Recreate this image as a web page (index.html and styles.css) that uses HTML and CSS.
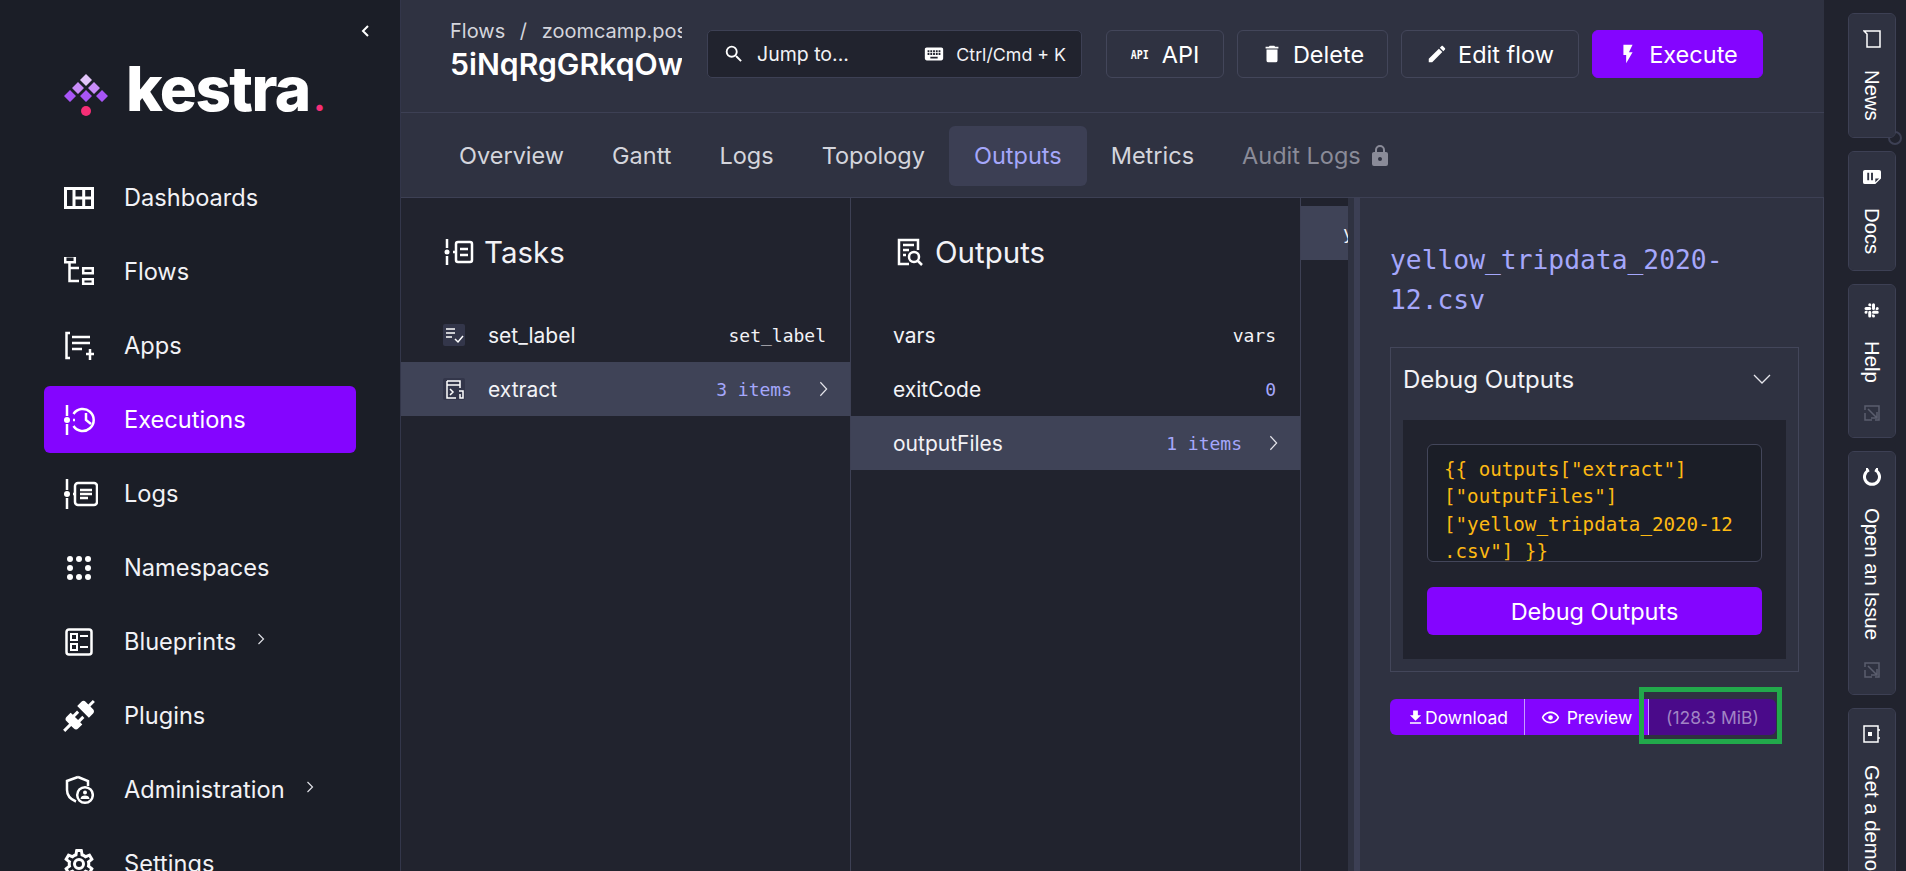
FILE: index.html
```html
<!DOCTYPE html>
<html lang="en">
<head>
    <meta charset="UTF-8">
    <meta name="viewport" content="width=device-width, initial-scale=1.0">
    <title>Kestra - Execution outputs</title>
    <link rel="stylesheet" href="styles.css">
</head>
<body>

    <aside class="sidebar">
        <div class="collapse-row">
            <svg class="collapse-icon" viewBox="0 0 10 14"><path d="M8 2 3 7l5 5"/></svg>
        </div>
        <div class="logo">
            <svg class="logo-mark" viewBox="0 0 44 44">
                <path class="d1" d="M22 1l6 6-6 6-6-6z"/>
                <path class="d2" d="M14 9l6 6-6 6-6-6zM30 9l6 6-6 6-6-6z"/>
                <path class="d3" d="M6 17l6 6-6 6-6-6zM22 17l6 6-6 6-6-6zM38 17l6 6-6 6-6-6z"/>
                <circle class="d4" cx="22" cy="38" r="5"/>
            </svg>
            <span class="logo-text">kestra<span class="logo-dot">.</span></span>
        </div>
        <nav class="nav">
            <a class="nav-item">
                <svg class="nav-icon stroke-wall" viewBox="0 0 30 22"><path d="M1.5 1.5h27v19h-27zM10 1.5v19M19.700 1.500v19M10 11h19"/></svg>
                Dashboards
            </a>
            <a class="nav-item">
                <svg class="nav-icon stroke" viewBox="0 2 30 30"><path d="M1.200 1.200h9.600v6H1.200zM5.500 8v18H15M5.500 13H15M19.200 13.200h9.600v5h-9.600zM19.200 24.200h9.600v4.500h-9.600z"/></svg>
                Flows
            </a>
            <a class="nav-item">
                <svg class="nav-icon stroke" viewBox="0 0 30 30"><path d="M6 2H2.500v25H6M8 6h18M8 12h18M8 18h10M22 23h8M26 18v11"/></svg>
                Apps
            </a>
            <a class="nav-item active">
                <svg class="nav-icon wide stroke" viewBox="0 0 34 30"><path d="M3 0v11M3 19v11M11 15H9M9.500 9a11 11 0 1 1 0 12M22 8v7l5 4"/><circle class="solid" cx="3" cy="15" r="3"/></svg>
                Executions
            </a>
            <a class="nav-item">
                <svg class="nav-icon wide stroke" viewBox="0 0 34 30"><path d="M3 0v11M3 19v11M11 15H9M14 4h16a3 3 0 0 1 3 3v16a3 3 0 0 1-3 3H14a3 3 0 0 1-3-3V7a3 3 0 0 1 3-3zM16 11h12M16 15h12M16 19h8"/><circle class="solid" cx="3" cy="15" r="3"/></svg>
                Logs
            </a>
            <a class="nav-item">
                <svg class="nav-icon" viewBox="0 0 30 30"><g class="solid"><circle cx="6" cy="6" r="3"/><circle cx="15" cy="6" r="3"/><circle cx="24" cy="6" r="3"/><circle cx="6" cy="15" r="3"/><circle cx="24" cy="15" r="3"/><circle cx="6" cy="24" r="3"/><circle cx="15" cy="24" r="3"/><circle cx="24" cy="24" r="3"/></g></svg>
                Namespaces
            </a>
            <a class="nav-item">
                <svg class="nav-icon stroke" viewBox="0 0 30 30"><path d="M5 2.500h20A2.500 2.500 0 0 1 27.500 5v20a2.500 2.500 0 0 1-2.500 2.500H5A2.500 2.500 0 0 1 2.500 25V5A2.500 2.500 0 0 1 5 2.500z"/><path class="thin" d="M7 7h6v6H7zM7 17h6v6H7zM16 9h8M16 20h8"/></svg>
                Blueprints <svg class="nav-arrow" viewBox="0 0 8 12"><path d="M1.500 1l5 5-5 5"/></svg>
            </a>
            <a class="nav-item">
                <svg class="nav-icon plug" viewBox="0 0 24 24"><path class="solid" d="M21.400 7.500C22.200 8.300 22.200 9.600 21.400 10.300L18.600 13.100L10.800 5.300L13.600 2.500C14.400 1.700 15.700 1.700 16.400 2.500L18.200 4.300L21.200 1.300L22.600 2.700L19.600 5.700L21.400 7.500M15.600 13.300L14.200 11.900L11.400 14.700L9.300 12.600L12.100 9.800L10.700 8.400L7.900 11.200L6.400 9.800L3.600 12.600C2.800 13.400 2.800 14.700 3.600 15.400L5.400 17.200L1.400 21.200L2.800 22.600L6.800 18.600L8.600 20.400C9.400 21.200 10.700 21.200 11.400 20.400L14.200 17.600L12.800 16.200L15.600 13.300Z"/></svg>
                Plugins
            </a>
            <a class="nav-item">
                <svg class="nav-icon stroke" viewBox="0 0 30 30"><path d="M14 2 3 6v9c0 6 4 9.500 9 11.500M14 2l10 4v5"/><circle cx="21" cy="20" r="7.800"/><circle class="solid" cx="21" cy="17.500" r="2"/><path class="solid" d="M16.500 24c0-2.500 2-3.500 4.500-3.500s4.500 1 4.500 3.500z"/></svg>
                Administration <svg class="nav-arrow" viewBox="0 0 8 12"><path d="M1.500 1l5 5-5 5"/></svg>
            </a>
            <a class="nav-item">
                <svg class="nav-icon cog" viewBox="0 0 24 24"><path class="solid" d="M12,8A4,4 0 0,1 16,12A4,4 0 0,1 12,16A4,4 0 0,1 8,12A4,4 0 0,1 12,8M12,10A2,2 0 0,0 10,12A2,2 0 0,0 12,14A2,2 0 0,0 14,12A2,2 0 0,0 12,10M10,22C9.75,22 9.54,21.82 9.5,21.58L9.13,18.93C8.5,18.68 7.96,18.34 7.44,17.94L4.95,18.95C4.73,19.03 4.46,18.95 4.34,18.73L2.34,15.27C2.21,15.05 2.27,14.78 2.46,14.63L4.57,12.97L4.5,12L4.57,11L2.46,9.37C2.27,9.22 2.21,8.95 2.34,8.73L4.34,5.27C4.46,5.05 4.73,4.96 4.95,5.05L7.44,6.05C7.96,5.66 8.5,5.32 9.13,5.07L9.5,2.42C9.54,2.18 9.75,2 10,2H14C14.25,2 14.46,2.18 14.5,2.42L14.87,5.07C15.5,5.32 16.04,5.66 16.56,6.05L19.05,5.05C19.27,4.96 19.54,5.05 19.66,5.27L21.66,8.73C21.79,8.95 21.73,9.22 21.54,9.37L19.43,11L19.5,12L19.43,13L21.54,14.63C21.73,14.78 21.79,15.05 21.66,15.27L19.66,18.73C19.54,18.95 19.27,19.04 19.05,18.95L16.56,17.95C16.04,18.34 15.5,18.68 14.87,18.93L14.5,21.58C14.46,21.82 14.25,22 14,22H10M11.25,4L10.88,6.61C9.68,6.86 8.62,7.5 7.85,8.39L5.44,7.35L4.69,8.65L6.8,10.2C6.4,11.37 6.4,12.64 6.8,13.8L4.68,15.36L5.43,16.66L7.86,15.62C8.63,16.5 9.68,17.14 10.87,17.38L11.24,20H12.76L13.13,17.39C14.32,17.14 15.37,16.5 16.14,15.62L18.57,16.66L19.32,15.36L17.2,13.81C17.6,12.64 17.6,11.37 17.2,10.2L19.31,8.65L18.56,7.35L16.15,8.39C15.38,7.5 14.32,6.86 13.12,6.62L12.75,4H11.25Z"/></svg>
                Settings
            </a>
        </nav>
    </aside>

    <main class="main">
        <header class="topbar">
            <div class="title-block">
                <div class="breadcrumb">Flows <span class="sep">/</span> zoomcamp.pos</div>
                <div class="page-title">5iNqRgGRkqOw</div>
            </div>
            <div class="search">
                <svg class="icon" viewBox="0 0 24 24"><path d="M9.5,3A6.5,6.5 0 0,1 16,9.5C16,11.11 15.41,12.59 14.44,13.73L14.71,14H15.5L20.5,19L19,20.5L14,15.5V14.71L13.73,14.44C12.59,15.41 11.11,16 9.5,16A6.5,6.5 0 0,1 3,9.5A6.5,6.5 0 0,1 9.5,3M9.5,5C7,5 5,7 5,9.5C5,12 7,14 9.5,14C12,14 14,12 14,9.5C14,7 12,5 9.5,5Z"/></svg>
                <span class="search-text">Jump to...</span>
                <svg class="icon kbd" viewBox="0 0 24 24"><path d="M19,10H17V8H19M19,13H17V11H19M16,10H14V8H16M16,13H14V11H16M16,17H8V15H16M7,10H5V8H7M7,13H5V11H7M8,11H10V13H8M8,8H10V10H8M11,11H13V13H11M11,8H13V10H11M20,5H4C2.89,5 2,5.89 2,7V17A2,2 0 0,0 4,19H20A2,2 0 0,0 22,17V7C22,5.89 21.1,5 20,5Z"/></svg>
                <span class="search-keys">Ctrl/Cmd + K</span>
            </div>
            <div class="actions">
                <button class="btn btn-api"><span class="api-mark">API</span> API</button>
                <button class="btn btn-delete">
                    <svg class="icon" viewBox="0 0 24 24"><path d="M19,4H15.5L14.5,3H9.5L8.5,4H5V6H19M6,19A2,2 0 0,0 8,21H16A2,2 0 0,0 18,19V7H6V19Z"/></svg>
                    Delete
                </button>
                <button class="btn btn-edit">
                    <svg class="icon" viewBox="0 0 24 24"><path d="M20.71,7.04C21.1,6.65 21.1,6 20.71,5.63L18.37,3.29C18,2.9 17.35,2.9 16.96,3.29L15.12,5.12L18.87,8.87M3,17.25V21H6.75L17.81,9.93L14.06,6.18L3,17.25Z"/></svg>
                    Edit flow
                </button>
                <button class="btn btn-primary">
                    <svg class="icon" viewBox="0 0 24 24"><path d="M7,2V13H10V22L17,10H13L17,2H7Z"/></svg>
                    Execute
                </button>
            </div>
        </header>

        <div class="tabs">
            <a class="tab">Overview</a>
            <a class="tab">Gantt</a>
            <a class="tab">Logs</a>
            <a class="tab">Topology</a>
            <a class="tab active">Outputs</a>
            <a class="tab">Metrics</a>
            <a class="tab disabled">Audit Logs
                <svg class="lock" viewBox="0 0 24 24"><path d="M12,17A2,2 0 0,0 14,15C14,13.89 13.1,13 12,13A2,2 0 0,0 10,15A2,2 0 0,0 12,17M18,8A2,2 0 0,1 20,10V20A2,2 0 0,1 18,22H6A2,2 0 0,1 4,20V10C4,8.89 4.9,8 6,8H7V6A5,5 0 0,1 12,1A5,5 0 0,1 17,6V8H18M12,3A3,3 0 0,0 9,6V8H15V6A3,3 0 0,0 12,3Z"/></svg>
            </a>
        </div>

        <div class="content">
            <section class="column">
                <h2 class="column-title">
                    <svg class="title-icon stroke" viewBox="0 0 30 30"><path d="M3 2v9M3 19v9M12 15H9M14 5h12a2 2 0 0 1 2 2v16a2 2 0 0 1-2 2H14a2 2 0 0 1-2-2V7a2 2 0 0 1 2-2zM16 12h8M16 18h8"/><circle class="solid" cx="3" cy="15" r="2.500"/></svg>
                    Tasks
                </h2>
                <div class="row">
                    <span class="task-icon">
                        <svg viewBox="0 0 22 22" class="stroke-thin"><path d="M3 5h9M3 9h9M3 13h6M12 15l3 3 5-6"/></svg>
                    </span>
                    <span class="row-name">set_label</span>
                    <span class="row-value">set_label</span>
                </div>
                <div class="row selected">
                    <span class="task-icon">
                        <svg viewBox="0 0 22 22" class="stroke-thin"><path d="M4 3h13v7M4 3v17h9M4 7h13M7 11l3 3-3 3M16 13h4v7h-3v-4"/></svg>
                    </span>
                    <span class="row-name">extract</span>
                    <span class="row-count">3 items</span>
                    <svg class="row-arrow" viewBox="0 0 10 18"><path d="M1.500 1.500 8.500 9l-7 7.500"/></svg>
                </div>
            </section>

            <section class="column">
                <h2 class="column-title outputs-title">
                    <svg class="title-icon stroke" viewBox="0 0 30 30"><path d="M14 27H4V3h19v10M8 8h11M8 13h6M8 18h3"/><circle cx="19" cy="20" r="5"/><path d="m23 24 4 4"/></svg>
                    Outputs
                </h2>
                <div class="row">
                    <span class="row-name">vars</span>
                    <span class="row-value">vars</span>
                </div>
                <div class="row">
                    <span class="row-name">exitCode</span>
                    <span class="row-count">0</span>
                </div>
                <div class="row selected">
                    <span class="row-name">outputFiles</span>
                    <span class="row-count">1 items</span>
                    <svg class="row-arrow" viewBox="0 0 10 18"><path d="M1.500 1.500 8.500 9l-7 7.500"/></svg>
                </div>
            </section>

            <section class="column-narrow">
                <div class="file-row">y</div>
            </section>

            <div class="resizer"></div>

            <section class="detail">
                <h3 class="file-name">yellow_tripdata_2020-<br>12.csv</h3>
                <div class="debug-box">
                    <div class="debug-head">
                        Debug Outputs
                        <svg class="debug-arrow" viewBox="0 0 18 10"><path d="M1 1l8 8 8-8"/></svg>
                    </div>
                    <div class="debug-body">
                        <div class="code-input">{{ outputs["extract"]<br>["outputFiles"]<br>["yellow_tripdata_2020-12<br>.csv"] }}</div>
                        <button class="debug-btn">Debug Outputs</button>
                    </div>
                </div>
                <div class="file-actions">
                    <a class="file-btn download">
                        <svg class="icon" viewBox="0 0 24 24"><path d="M5,20H19V18H5M19,9H15V3H9V9H5L12,16L19,9Z"/></svg>
                        Download
                    </a>
                    <a class="file-btn preview">
                        <svg class="icon" viewBox="0 0 24 24"><path d="M12,9A3,3 0 0,1 15,12A3,3 0 0,1 12,15A3,3 0 0,1 9,12A3,3 0 0,1 12,9M12,4.5C17,4.5 21.27,7.61 23,12C21.27,16.39 17,19.5 12,19.5C7,19.5 2.73,16.39 1,12C2.73,7.61 7,4.5 12,4.5M3.18,12C4.83,15.36 8.24,17.5 12,17.5C15.76,17.5 19.17,15.36 20.82,12C19.17,8.64 15.76,6.5 12,6.5C8.24,6.5 4.83,8.64 3.18,12Z"/></svg>
                        Preview
                    </a>
                    <span class="file-size">(128.3 MiB)</span>
                    <span class="highlight"></span>
                </div>
            </section>
        </div>
    </main>

    <aside class="rightbar">
        <a class="side-card">
            <svg class="side-icon stroke-thin" viewBox="0 0 18 18"><path d="M1 1h16v16H4V4z"/></svg>
            <span class="side-label">News</span>
            <span class="ring"></span>
        </a>
        <a class="side-card">
            <svg class="side-icon" viewBox="0 0 19 15"><path class="solid" fill-rule="evenodd" d="M2 0h15a2 2 0 0 1 2 2v7l-6 6H2a2 2 0 0 1-2-2V2a2 2 0 0 1 2-2zM4.500 3v8h2V3zM8.500 3v8h2V3zM13 13l4-4h-4z"/></svg>
            <span class="side-label">Docs</span>
        </a>
        <a class="side-card">
            <svg class="side-icon" viewBox="0 0 24 24"><path class="solid" d="M6,15A2,2 0 0,1 4,17A2,2 0 0,1 2,15A2,2 0 0,1 4,13H6V15M7,15A2,2 0 0,1 9,13A2,2 0 0,1 11,15V20A2,2 0 0,1 9,22A2,2 0 0,1 7,20V15M9,7A2,2 0 0,1 7,5A2,2 0 0,1 9,3A2,2 0 0,1 11,5V7H9M9,8A2,2 0 0,1 11,10A2,2 0 0,1 9,12H4A2,2 0 0,1 2,10A2,2 0 0,1 4,8H9M17,10A2,2 0 0,1 19,8A2,2 0 0,1 21,10A2,2 0 0,1 19,12H17V10M16,10A2,2 0 0,1 14,12A2,2 0 0,1 12,10V5A2,2 0 0,1 14,3A2,2 0 0,1 16,5V10M14,18A2,2 0 0,1 16,20A2,2 0 0,1 14,22A2,2 0 0,1 12,20V18H14M14,17A2,2 0 0,1 12,15A2,2 0 0,1 14,13H19A2,2 0 0,1 21,15A2,2 0 0,1 19,17H14Z"/></svg>
            <span class="side-label">Help</span>
            <svg class="side-ext" viewBox="0 0 16 16"><path d="M1 5V1h14v14H11M1 8v7h7M4 4l9 9M13 7v6H7"/></svg>
        </a>
        <a class="side-card">
            <svg class="side-icon stroke-bold" viewBox="0 0 18 18"><path d="M6 2a7.500 7.500 0 1 0 6 0M3 1h2M13 1h2"/></svg>
            <span class="side-label">Open an Issue</span>
            <svg class="side-ext" viewBox="0 0 16 16"><path d="M1 5V1h14v14H11M1 8v7h7M4 4l9 9M13 7v6H7"/></svg>
        </a>
        <a class="side-card">
            <svg class="side-icon stroke-thin" viewBox="0 0 18 18"><path d="M1 1h14v16H1zM15 5h2M15 13h2"/><rect class="solid" x="5" y="7" width="4" height="4"/></svg>
            <span class="side-label">Get a demo</span>
        </a>
    </aside>

</body>
</html>
```

FILE: styles.css
```css
* {
    box-sizing: border-box;
}
html, body {
    height: 100%;
}
body {
    margin: 0;
    display: flex;
    height: 100vh;
    overflow: hidden;
    background-color: #1b1e27;
    color: #f2f2f6;
    font-family: 'Inter', 'Liberation Sans', sans-serif;
}
svg {
    display: block;
    flex-shrink: 0;
}
.solid {
    fill: #fff;
    stroke: none;
}
.stroke {
    fill: none;
    stroke: #fff;
    stroke-width: 2.5;
}
.stroke-wall {
    fill: none;
    stroke: #fff;
    stroke-width: 3;
}
.stroke .thin {
    stroke-width: 2;
}
.stroke .solid {
    fill: #fff;
    stroke: none;
}
.stroke-thin {
    fill: none;
    stroke: #fff;
    stroke-width: 1.5;
}
.stroke-bold {
    fill: none;
    stroke: #fff;
    stroke-width: 3;
}
.icon {
    width: 22px;
    height: 22px;
    fill: #fff;
}

/* sidebar */
.sidebar {
    width: 401px;
    flex-shrink: 0;
    height: 100%;
    overflow: hidden;
    border-right: 1px solid #33364a;
}
.collapse-row {
    display: flex;
    justify-content: flex-end;
    height: 64px;
    padding: 24px 30px 0 0;
}
.collapse-icon {
    width: 10px;
    height: 14px;
    fill: none;
    stroke: #fff;
    stroke-width: 2;
}
.logo {
    display: flex;
    align-items: flex-end;
    height: 50px;
    padding-left: 64px;
}
.logo-mark {
    width: 44px;
    height: 44px;
    margin-bottom: -3px;
}
.d1 { fill: #e3c5fb; }
.d2 { fill: #c88cf8; }
.d3 { fill: #a855f7; }
.d4 { fill: #f62e76; }
.logo-text {
    margin-left: 18px;
    font-size: 62px;
    font-weight: 800;
    line-height: 50px;
    letter-spacing: -1.6px;
    color: #fff;
}
.logo-dot {
    margin-left: 4px;
    color: #f62e76;
    font-size: 34px;
    line-height: 0;
}
.nav {
    display: flex;
    flex-direction: column;
    gap: 7px;
    margin-top: 50px;
    padding: 0 44px;
}
.nav-item {
    display: flex;
    align-items: center;
    flex-shrink: 0;
    height: 67px;
    padding-left: 20px;
    border-radius: 6px;
    font-size: 23.6px;
    white-space: nowrap;
}
.nav-item.active {
    background-color: #8405ff;
    color: #fff;
}
.nav-icon {
    width: 30px;
    height: 30px;
    margin-right: 30px;
}
.nav-icon.wide {
    width: 34px;
    margin: 0 26px 0 0;
}
.nav-icon.plug, .nav-icon.cog {
    width: 36px;
    height: 36px;
    margin: 0 27px 0 -3px;
}
.nav-arrow {
    width: 8px;
    height: 12px;
    margin-left: 21px;
    margin-top: -6px;
    fill: none;
    stroke: #dfe0e6;
    stroke-width: 1.2;
}

/* main */
.main {
    flex: 1;
    min-width: 0;
    display: flex;
    flex-direction: column;
    background-color: #2f3241;
}
.topbar {
    display: flex;
    align-items: center;
    flex-shrink: 0;
    height: 113px;
    padding-left: 49px;
    padding-bottom: 4px;
    border-bottom: 1px solid #3d4054;
}
.title-block {
    width: 232px;
    overflow: hidden;
    white-space: nowrap;
    margin-top: -10px;
}
.breadcrumb {
    font-size: 20px;
    line-height: 30px;
    color: #d4d5dc;
}
.sep {
    margin: 0 9px;
}
.page-title {
    font-size: 30.2px;
    line-height: 36px;
    font-weight: 600;
    color: #fff;
}
.search {
    display: flex;
    align-items: center;
    width: 375px;
    height: 48px;
    margin-left: 25px;
    padding: 0 15px;
    background-color: #21232e;
    border: 1px solid #3d4054;
    border-radius: 5px;
}
.search-text {
    margin-left: 12px;
    font-size: 19.5px;
}
.kbd {
    margin-left: auto;
}
.search-keys {
    margin-left: 11px;
    font-size: 17.8px;
}
.actions {
    display: flex;
    gap: 13px;
    margin-left: 24px;
}
.btn {
    display: flex;
    align-items: center;
    justify-content: center;
    gap: 10px;
    height: 48px;
    padding: 0;
    background-color: transparent;
    border: 1px solid #43465a;
    border-radius: 6px;
    color: #fff;
    font-family: inherit;
    font-size: 23.5px;
}
.btn-api { width: 118px; }
.btn-delete { width: 151px; }
.btn-edit { width: 178px; }
.btn-primary {
    width: 171px;
    background-color: #8405ff;
    border-color: #8405ff;
}
.api-mark {
    font-family: 'DejaVu Sans Mono', monospace;
    font-size: 10px;
    font-weight: 700;
    margin-right: 3px;
    transform: scaleY(1.3);
}

/* tabs */
.tabs {
    display: flex;
    align-items: center;
    flex-shrink: 0;
    height: 85px;
    padding-left: 34px;
    padding-top: 1px;
    border-bottom: 1px solid #3d4054;
}
.tab {
    display: flex;
    align-items: center;
    height: 60px;
    padding: 0 24px;
    border-radius: 6px;
    font-size: 23.5px;
    color: #d4d5dc;
}
.tab.active {
    background-color: #3c3f54;
    color: #a5a7fb;
    padding: 0 25px;
}
.tab.disabled {
    color: #8a8b98;
}
.lock {
    width: 24px;
    height: 24px;
    margin-left: 7px;
    fill: #8a8b98;
}

/* columns */
.content {
    flex: 1;
    min-height: 0;
    display: flex;
    background-color: #21232e;
}
.column {
    width: 450px;
    flex-shrink: 0;
    border-right: 1px solid #3d4054;
}
.column-title {
    display: flex;
    align-items: center;
    height: 110px;
    margin: 0;
    padding: 0 0 2px 43px;
    font-size: 29.5px;
    font-weight: 400;
}
.title-icon {
    width: 30px;
    height: 30px;
    margin-right: 10px;
}
.outputs-title {
    padding-left: 44px;
}
.row {
    display: flex;
    align-items: center;
    height: 54px;
    padding-left: 42px;
    padding-right: 24px;
}
.row.selected {
    background-color: #3f4357;
    padding-right: 22px;
}
.task-icon {
    width: 22px;
    height: 22px;
    margin-right: 23px;
    background-color: #33364a;
    border-radius: 2px;
}
.task-icon svg {
    width: 22px;
    height: 22px;
}
.row-name {
    font-size: 21px;
    margin-right: auto;
}
.row-value, .row-count {
    font-family: 'DejaVu Sans Mono', monospace;
    font-size: 18px;
}
.row-count {
    color: #a5a7fb;
}
.row-arrow {
    width: 9px;
    height: 18px;
    margin-left: 27px;
    fill: none;
    stroke: #e6e6ec;
    stroke-width: 1.3;
}
.column-narrow {
    width: 47px;
    flex-shrink: 0;
    overflow: hidden;
    padding-top: 8px;
}
.file-row {
    height: 54px;
    padding-left: 42px;
    background-color: #3f4357;
    font-family: 'DejaVu Sans Mono', monospace;
    font-size: 18px;
    line-height: 54px;
    white-space: nowrap;
}
.resizer {
    width: 12px;
    flex-shrink: 0;
    background: linear-gradient(to right, #2f3241 6px, #3c3f54 6px);
}

/* detail panel */
.detail {
    flex: 1;
    min-width: 0;
    padding: 42px 24px 0 30px;
    background-color: #2f3241;
    border-right: 1px solid #3d4054;
}
.file-name {
    margin: 0 0 27px;
    font-family: 'DejaVu Sans Mono', monospace;
    font-size: 26.3px;
    line-height: 40px;
    font-weight: 400;
    color: #a5a7fb;
}
.debug-box {
    border: 1px solid #43465a;
    padding: 0 12px 12px;
}
.debug-head {
    display: flex;
    align-items: center;
    justify-content: space-between;
    height: 72px;
    padding-bottom: 10px;
    font-size: 24px;
}
.debug-arrow {
    width: 18px;
    height: 10px;
    margin-right: 15px;
    fill: none;
    stroke: #e6e6ec;
    stroke-width: 1.3;
}
.debug-body {
    padding: 24px;
    background-color: #21232e;
}
.code-input {
    height: 118px;
    overflow: hidden;
    padding: 11px 16px;
    background-color: #1b1e27;
    border: 1px solid #43465a;
    border-radius: 6px;
    font-family: 'DejaVu Sans Mono', monospace;
    font-size: 19.2px;
    line-height: 27.3px;
    color: #fdb913;
    white-space: nowrap;
}
.debug-btn {
    display: block;
    width: 100%;
    height: 48px;
    margin-top: 25px;
    padding-top: 2px;
    background-color: #8405ff;
    border: none;
    border-radius: 6px;
    color: #fff;
    font-family: inherit;
    font-size: 23.5px;
}
.file-actions {
    position: relative;
    display: flex;
    width: 386px;
    height: 36px;
    margin-top: 27px;
    border-radius: 6px;
    font-size: 17.5px;
}
.file-btn {
    display: flex;
    align-items: center;
    justify-content: center;
    background-color: #8405ff;
    color: #fff;
    border-right: 1px solid #c79bff;
}
.file-btn .icon {
    width: 19px;
    height: 19px;
}
.download {
    width: 135px;
    border-radius: 6px 0 0 6px;
}
.preview {
    width: 124px;
    gap: 7px;
}
.file-size {
    display: flex;
    align-items: center;
    justify-content: center;
    width: 127px;
    background-color: #4a0a8a;
    border-radius: 0 6px 6px 0;
    color: #a184c4;
}
/* green box drawn over the size label */
.highlight {
    position: absolute;
    left: 249px;
    top: -12px;
    width: 143px;
    height: 57px;
    border: 5px solid #22a94b;
}

/* right bar */
.rightbar {
    width: 82px;
    flex-shrink: 0;
    height: 100%;
    overflow: hidden;
    display: flex;
    flex-direction: column;
    gap: 13px;
    padding: 13px 0 0 24px;
    background-color: #21232e;
    isolation: isolate;
}
.side-card {
    position: relative;
    display: flex;
    flex-direction: column;
    align-items: center;
    flex-shrink: 0;
    gap: 22px;
    width: 48px;
    padding: 16px 0;
    background-color: #2f3241;
    border: 1px solid #3d4054;
    border-radius: 6px;
    background-clip: padding-box;
}
.side-icon {
    width: 18px;
    height: 18px;
}
.side-ext {
    width: 16px;
    height: 16px;
    fill: none;
    stroke: #5b5e6e;
    stroke-width: 1.5;
}
.side-label {
    writing-mode: vertical-rl;
    font-family: 'Liberation Sans', Arial, sans-serif;
    font-size: 20.3px;
    line-height: 20px;
    color: #fff;
    white-space: nowrap;
}
.ring {
    position: absolute;
    right: -7px;
    bottom: -8px;
    width: 14px;
    height: 14px;
    border: 2px solid #3d4054;
    border-radius: 50%;
    z-index: -1;
}
```
